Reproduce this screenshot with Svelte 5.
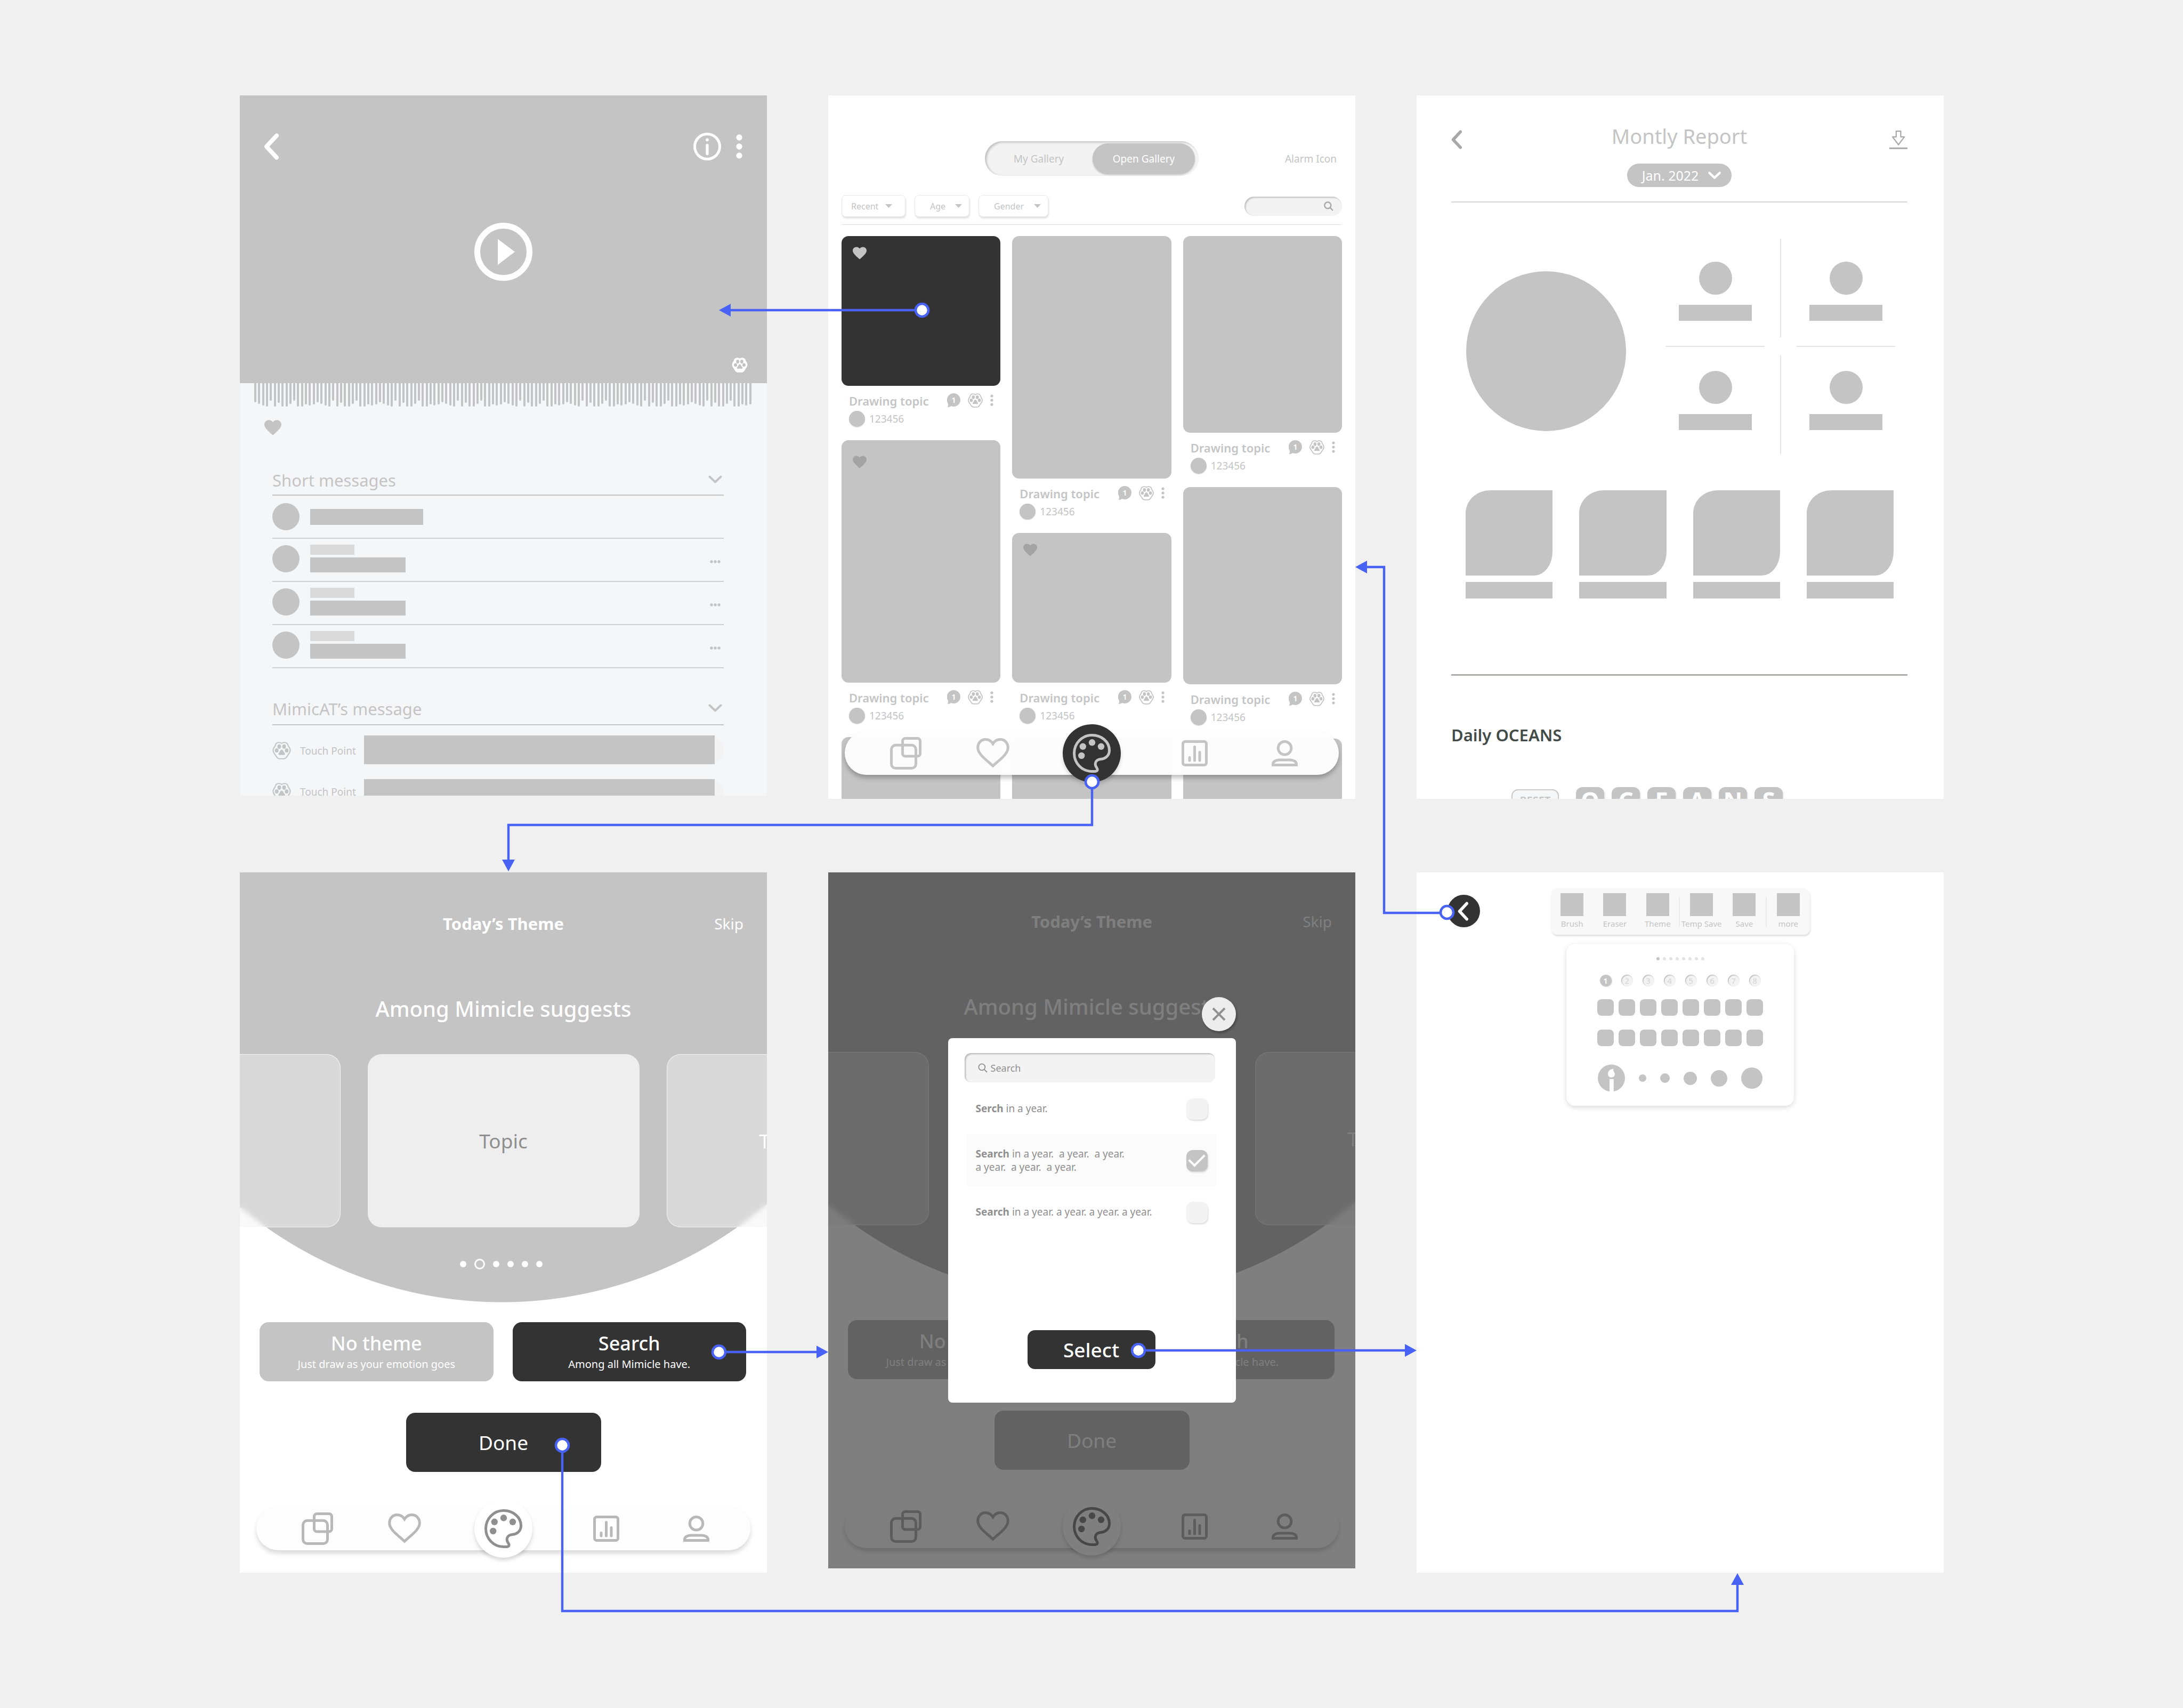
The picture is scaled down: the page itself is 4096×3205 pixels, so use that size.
<script>
  const wave = [36, 39, 42, 44, 33, 44, 37, 44, 44, 39, 33, 44, 44, 40, 42, 40];
  const bars = Array.from({ length: 128 }, (_, i) => wave[i % wave.length]);

  const gallery = [
    [
      { height: 281, tone: 'dark', liked: true },
      { height: 455, liked: true, low: true },
      { height: 300, bare: true }
    ],
    [{ height: 455 }, { height: 281, liked: true }, { height: 300, bare: true }],
    [{ height: 369 }, { height: 370 }, { height: 300, bare: true }]
  ];

  const numbers = [1, 2, 3, 4, 5, 6, 7, 8];
  const letters = ['O', 'C', 'E', 'A', 'N', 'S'];
  const brushes = [14, 18, 25, 31, 40];
</script>

{#snippet paw(solid)}
  <svg class="paw" class:solid viewBox="0 0 35 33.5" aria-hidden="true">
    <path class="edge" d="M12 1.3C14 1.3 16 1.6 17.5 3C19 1.6 21 1.3 23 1.3C27.5 1.3 29.5 4 30 8C31.5 10 33.8 12.5 33.8 16C33.8 21 29 25 27 29C25.5 31.5 23.5 32.2 21.5 32.2H13.5C11.5 32.2 9.5 31.5 8 29C6 25 1.2 21 1.2 16C1.2 12.5 3.5 10 5 8C5.5 4 7.5 1.3 12 1.3Z" />
    <g class="toes">
      <ellipse cx="12.9" cy="9" rx="3.5" ry="4.2" />
      <ellipse cx="22.1" cy="9" rx="3.5" ry="4.2" />
      <ellipse cx="8" cy="16.4" rx="3.5" ry="3.9" />
      <ellipse cx="27" cy="16.4" rx="3.5" ry="3.9" />
      <path d="M17.5 15C19.5 15 20.5 17 21 18.5C22 20.5 24.2 21.7 23.7 23.9C23 25.8 20 24.8 17.5 24.8S12 25.8 11.3 23.9C10.8 21.7 13 20.5 14 18.5C14.5 17 15.5 15 17.5 15Z" />
    </g>
  </svg>
{/snippet}

{#snippet heart()}
  <svg class="heart" viewBox="0 0 32 29" aria-hidden="true">
    <path d="M16 28.8L13.7 26.7C5.5 19.2 0 14.2 0 8.6C0 3.8 3.6.2 8.4.2C11.3.2 14.2 1.6 16 3.9C17.8 1.6 20.7.2 23.6.2C28.4.2 32 3.8 32 8.6C32 14.2 26.5 19.2 18.3 26.7Z" fill="currentColor" />
  </svg>
{/snippet}

{#snippet chevron()}
  <svg class="chevron" viewBox="0 0 26 15" aria-hidden="true">
    <path d="M2.5 2.5L13 12.5L23.5 2.5" />
  </svg>
{/snippet}

{#snippet back()}
  <svg class="back-icon" viewBox="0 0 28 50" aria-hidden="true">
    <path d="M24 4.5L5 25L24 45.5" />
  </svg>
{/snippet}

{#snippet magnifier()}
  <svg class="magnifier" viewBox="0 0 18 18" aria-hidden="true">
    <circle cx="7.3" cy="7.3" r="6" />
    <path d="M11.6 11.6L17 17" />
  </svg>
{/snippet}

{#snippet kebab()}
  <svg class="kebab" viewBox="0 0 6 22" aria-hidden="true">
    <circle cx="3" cy="3" r="2.6" /><circle cx="3" cy="11" r="2.6" /><circle cx="3" cy="19" r="2.6" />
  </svg>
{/snippet}

{#snippet tabs(kind)}
  <nav class="tabs {kind}" aria-label="Main">
    <button aria-label="Gallery">
      <svg width="59" height="61" viewBox="0 0 59 61">
        <rect x="2.5" y="15.3" width="46" height="43.2" rx="8" />
        <rect x="23.5" y="2.5" width="33" height="33.5" rx="5" />
      </svg>
    </button>
    <button aria-label="Likes">
      <svg width="62" height="56" viewBox="0 0 62 56">
        <path d="M31 52.3C20 41.5 2.7 31 2.7 17.8C2.7 9 9 2.6 17 2.6C23.3 2.6 28.2 6.2 31 10.6C33.8 6.2 38.7 2.6 45 2.6C53 2.6 59.3 9 59.3 17.8C59.3 31 42 41.5 31 52.3Z" />
      </svg>
    </button>
    <button class="draw" aria-label="Draw">
      <svg width="71" height="73" viewBox="0 0 71 73">
        <path d="M36 2.5C54 2.5 68.5 15 68.5 31C68.5 42 60 46.8 52.5 47.5C44 48.3 40.5 54 43 60.5C44.3 63.8 46.6 65 46 68C45.4 70.8 40.5 70.5 36 70.5C17 70.5 2.5 55 2.5 36.5C2.5 18 17 2.5 36 2.5Z" />
        <g class="dots">
          <circle cx="36" cy="16.3" r="6.2" /><circle cx="18.8" cy="23.8" r="6.2" />
          <circle cx="53" cy="23.8" r="6.2" /><circle cx="16.2" cy="41" r="6.2" />
        </g>
      </svg>
    </button>
    <button aria-label="Report">
      <svg width="49" height="49" viewBox="0 0 49 49">
        <rect x="2.5" y="2.5" width="44" height="44" rx="4" />
        <path d="M15 32.5V38M24.5 12.5V38M34 22.5V38" stroke-linecap="round" />
      </svg>
    </button>
    <button aria-label="Profile">
      <svg width="49" height="49" viewBox="0 0 49 49">
        <circle cx="24.5" cy="14.8" r="12.3" />
        <path d="M2.4 46.6V45C2.4 40 8 37 14 37H35C41 37 46.6 40 46.6 45V46.6Z" />
      </svg>
    </button>
  </nav>
{/snippet}

{#snippet theme(muted)}
  <div class="theme" class:muted>
    <header class="theme-head">
      <h2>Today’s Theme</h2>
      <button class="skip">Skip</button>
    </header>
    <p class="suggest">Among Mimicle suggests</p>
    <div class="carousel">
      <div class="topic side"></div>
      <div class="topic">{muted ? '' : 'Topic'}</div>
      <div class="topic side">Topic</div>
    </div>
    <div class="pager">
      <i></i><i class="current"></i><i></i><i></i><i></i><i></i>
    </div>
    <div class="choices">
      <button class="choice"><strong>No theme</strong><span>Just draw as your emotion goes</span></button>
      <button class="choice dark"><strong>Search</strong><span>Among all Mimicle have.</span></button>
    </div>
    <button class="done">Done</button>
    {@render tabs('light')}
  </div>
{/snippet}

<main class="board">
  <section class="screen detail" aria-label="Drawing detail">
    <div class="hero">
      <div class="hero-bar">
        <button aria-label="Back">{@render back()}</button>
        <div class="hero-actions">
          <button aria-label="Information">
            <svg width="52" height="52" viewBox="0 0 52 52">
              <circle cx="26" cy="26" r="23.5" fill="none" stroke="#fff" stroke-width="5" />
              <circle cx="26" cy="13.3" r="2.9" fill="#fff" />
              <path d="M26 23.5V39.5" stroke="#fff" stroke-width="5.4" stroke-linecap="round" />
            </svg>
          </button>
          <button aria-label="More">
            <svg width="12" height="46" viewBox="0 0 12 46" fill="#fff">
              <circle cx="6" cy="6" r="5.7" /><circle cx="6" cy="23" r="5.7" /><circle cx="6" cy="40" r="5.7" />
            </svg>
          </button>
        </div>
      </div>
      <button class="play" aria-label="Play">
        <svg width="109" height="109" viewBox="0 0 109 109">
          <circle cx="54.5" cy="54.5" r="49" fill="none" stroke="#fff" stroke-width="11" />
          <path d="M44 30.5L76 54.5L44 79Z" fill="#fff" />
        </svg>
      </button>
      <div class="hero-foot">{@render paw(true)}</div>
    </div>
    <div class="wave">
      {#each bars as h}<i style="height: {h}px"></i>{/each}
    </div>
    <div class="detail-body">
      <button class="like" aria-label="Like">{@render heart()}</button>
      <header class="fold"><h2>Short messages</h2>{@render chevron()}</header>
      <ul class="messages">
        <li class="single"><i class="avatar"></i><div class="lines"><i class="long"></i></div></li>
        {#each [1, 2, 3] as n}
          <li>
            <i class="avatar"></i>
            <div class="lines"><i class="name"></i><i class="text"></i></div>
            <button class="more" aria-label="More">
              <svg width="20" height="6" viewBox="0 0 20 6" fill="currentColor">
                <circle cx="3" cy="3" r="2.7" /><circle cx="10" cy="3" r="2.7" /><circle cx="17" cy="3" r="2.7" />
              </svg>
            </button>
          </li>
        {/each}
      </ul>
      <header class="fold second"><h2>MimicAT’s message</h2>{@render chevron()}</header>
      <div class="touch">
        <div class="touch-labels">
          <div>{@render paw(false)}<span>Touch Point</span></div>
          <div>{@render paw(false)}<span>Touch Point</span></div>
        </div>
        <div class="touch-bars">
          <div><i></i></div>
          <div><i></i></div>
        </div>
      </div>
    </div>
  </section>

  <section class="screen gallery" aria-label="Open gallery">
    <header class="gallery-head">
      <div class="toggle">
        <button>My Gallery</button>
        <button class="active">Open Gallery</button>
      </div>
      <span class="alarm">Alarm Icon</span>
    </header>
    <div class="filters">
      {#each [['recent', 'Recent'], ['age', 'Age'], ['gender', 'Gender']] as [id, label]}
        <div class="filter {id}">
          <select aria-label={label}><option>{label}</option></select>
          <svg width="13" height="7" viewBox="0 0 13 7" aria-hidden="true"><path d="M0 0H13L6.5 7Z" fill="currentColor" /></svg>
        </div>
      {/each}
      <div class="find">
        <input type="text" aria-label="Find drawings" />
        {@render magnifier()}
      </div>
    </div>
    <div class="columns">
      {#each gallery as column}
        <div class="column">
          {#each column as card}
            <div class="card" class:dark={card.tone === 'dark'} class:low={card.low} style="height: {card.height}px">
              {#if card.liked}{@render heart()}{/if}
            </div>
            {#if !card.bare}
              <div class="meta">
                <div class="about">
                  <h3>Drawing topic</h3>
                  <p><i class="avatar"></i>123456</p>
                </div>
                <div class="marks">
                  <svg width="25" height="26" viewBox="0 0 25 26">
                    <path d="M12.5 0A12.5 12.5 0 0 1 12.5 25C10.6 25 9 24.6 7.5 23.9C5.5 25.4 3 26.2.5 25.8C2 24.2 2.2 22.2 1.9 19.4A12.5 12.5 0 0 1 12.5 0Z" fill="currentColor" />
                    <text x="12.5" y="17.8" text-anchor="middle">1</text>
                  </svg>
                  {@render paw(false)}
                  {@render kebab()}
                </div>
              </div>
            {/if}
          {/each}
        </div>
      {/each}
    </div>
    {@render tabs('floating')}
  </section>

  <section class="screen report" aria-label="Monthly report">
    <header class="report-head">
      <button aria-label="Back">{@render back()}</button>
      <h2>Montly Report</h2>
      <button class="download" aria-label="Download">
        <svg width="34" height="35" viewBox="0 0 34 35">
          <path d="M12.8 1.2H21.4V11.8H28.2L17.1 26.5L6 11.8H12.8Z" fill="none" stroke="currentColor" stroke-width="2.2" stroke-linejoin="round" />
          <path d="M0 33.3H34" stroke="currentColor" stroke-width="3" />
        </svg>
      </button>
    </header>
    <button class="month">Jan. 2022 {@render chevron()}</button>
    <hr />
    <div class="summary">
      <i class="disc"></i>
      <div class="quad">
        <div class="cell"><i class="dot"></i><i class="label"></i></div>
        <i class="rule"></i>
        <div class="cell"><i class="dot"></i><i class="label"></i></div>
        <i class="rule"></i><span></span><i class="rule"></i>
        <div class="cell lower"><i class="dot"></i><i class="label"></i></div>
        <i class="rule"></i>
        <div class="cell lower"><i class="dot"></i><i class="label"></i></div>
      </div>
    </div>
    <div class="leaves">
      {#each [1, 2, 3, 4] as n}<div><i class="leaf"></i><i class="strip"></i></div>{/each}
    </div>
    <hr class="strong" />
    <h3>Daily OCEANS</h3>
    <div class="keys">
      <button class="reset">RESET</button>
      {#each letters as letter}<button class="key">{letter}</button>{/each}
    </div>
  </section>

  <section class="screen white" aria-label="Theme selection">
    {@render theme(false)}
  </section>

  <section class="screen white short" aria-label="Theme search">
    {@render theme(true)}
    <div class="scrim"></div>
    <div class="dialog-layer">
      <button class="close" aria-label="Close">
        <svg width="26" height="26" viewBox="0 0 26 26"><path d="M2 2L24 24M24 2L2 24" stroke="currentColor" stroke-width="4" /></svg>
      </button>
      <div class="dialog" role="dialog" aria-label="Search themes">
        <div class="search-box">
          {@render magnifier()}
          <input type="text" placeholder="Search" aria-label="Search" />
        </div>
        <label class="result"><span><b>Serch</b> in a year.</span><input type="checkbox" /></label>
        <label class="result picked"><span><b>Search</b>{' in a year.  a year.  a year.\na year.  a year.  a year.'}</span><input type="checkbox" checked /></label>
        <label class="result"><span><b>Search</b> in a year. a year. a year. a year.</span><input type="checkbox" /></label>
        <button class="select">Select</button>
      </div>
    </div>
  </section>

  <section class="screen white canvas" aria-label="Drawing canvas">
    <button class="leave" aria-label="Back">{@render back()}</button>
    <div class="tools">
      <div class="toolbar">
        <button><i></i>Brush</button>
        <button><i></i>Eraser</button>
        <button><i></i>Theme</button>
        <span class="split"></span>
        <button><i></i>Temp Save</button>
        <button><i></i>Save</button>
        <span class="split"></span>
        <button><i></i>more</button>
      </div>
      <div class="panel">
        <div class="steps">{#each numbers as n}<i class:on={n === 1}></i>{/each}</div>
        <div class="sets">{#each numbers as n}<button class:on={n === 1}>{n}</button>{/each}</div>
        <div class="swatches">{#each numbers as n}<i></i>{/each}</div>
        <div class="swatches">{#each numbers as n}<i></i>{/each}</div>
        <div class="sizes">
          <svg width="51" height="52" viewBox="0 0 51 52">
            <circle cx="25.5" cy="26" r="25.5" fill="#c4c4c4" />
            <path d="M29.6 8.6C22.5 9.2 19 13.4 19 18.2C19 22 21.6 24.7 25.4 24.7C29.4 24.7 32.2 22 31.8 18C31.4 14.6 27.6 12.8 29.6 8.6Z" fill="#fff" />
            <path d="M22 27.8H29.8V52H22Z" fill="#fff" />
          </svg>
          {#each brushes as size}<i style="width: {size}px; height: {size}px"></i>{/each}
        </div>
      </div>
    </div>
  </section>

  <svg class="flows" viewBox="0 0 4096 3205" aria-hidden="true">
    <g class="lines">
      <path d="M1730 582H1368" />
      <path d="M2049 1467V1548H954V1616" />
      <path d="M2715 1713H2597V1064H2562" />
      <path d="M1349 2537H1535" />
      <path d="M2136 2534H2640" />
      <path d="M1055 2712V3023H3260V2970" />
    </g>
    <g class="heads">
      <path d="M1349 582L1371 570V594Z" />
      <path d="M954 1635L942 1613H966Z" />
      <path d="M2543 1064L2565 1052V1076Z" />
      <path d="M1554 2537L1532 2525V2549Z" />
      <path d="M2658 2534L2636 2522V2546Z" />
      <path d="M3260 2952L3248 2974H3272Z" />
    </g>
    <g class="stops">
      <circle cx="1730" cy="582" r="12" />
      <circle cx="2049" cy="1467" r="12" />
      <circle cx="2715" cy="1712" r="12" />
      <circle cx="1349" cy="2537" r="12" />
      <circle cx="2136" cy="2534" r="12" />
      <circle cx="1055" cy="2712" r="12" />
    </g>
  </svg>
</main>

<style>
  :global(body) {
    background: #f0f0f0;
    font-family: 'Noto Sans', sans-serif;
    color: #c4c4c4;
  }

  .board {
    position: relative;
    box-sizing: border-box;
    min-height: 100vh;
    padding: 179px 449px 254px 450px;
    display: grid;
    grid-template-columns: repeat(3, minmax(0, 1fr));
    column-gap: 115px;
    row-gap: 138px;
    align-items: start;
    background: #f0f0f0;
  }

  .board :global(*) {
    box-sizing: border-box;
  }

  h2, h3, p, ul { margin: 0; padding: 0; list-style: none; font-weight: 400; }
  i { display: block; font-style: normal; }
  svg { display: block; flex: none; }
  button {
    font: inherit;
    color: inherit;
    background: none;
    border: 0;
    padding: 0;
    cursor: pointer;
  }
  input, select { font: inherit; color: inherit; border: 0; outline: 0; background: none; }

  .screen {
    position: relative;
    overflow: hidden;
    aspect-ratio: 989 / 1320;
    background: #fff;
  }
  .detail, .white { aspect-ratio: 989 / 1314; }
  .short { aspect-ratio: 989 / 1306; }

  .paw { width: 35px; height: 33px; }
  .paw .edge { fill: none; stroke: currentColor; stroke-width: 2.2; }
  .paw .toes { fill: currentColor; }
  .paw.solid { width: 30px; height: 28px; }
  .paw.solid .edge { fill: #fff; stroke: #fff; }
  .paw.solid .toes { fill: #c4c4c4; }
  .heart { width: 32px; height: 29px; }
  .chevron { width: 26px; height: 15px; }
  .chevron path, .back-icon path {
    fill: none;
    stroke: currentColor;
    stroke-width: 4;
    stroke-linecap: round;
    stroke-linejoin: round;
  }
  .back-icon { width: 28px; height: 50px; }
  .back-icon path { stroke-width: 8; }
  .magnifier { width: 18px; height: 18px; fill: none; stroke: currentColor; stroke-width: 2.4; }
  .kebab { width: 6px; height: 22px; fill: currentColor; }

  /* Drawing detail */
  .detail { background: #f5f6f8; }
  .hero {
    height: 540px;
    padding: 70px 36px 20px 45px;
    background: #c4c4c4;
    color: #fff;
    display: flex;
    flex-direction: column;
    justify-content: space-between;
  }
  .hero-bar, .hero-actions { display: flex; align-items: center; justify-content: space-between; }
  .hero-actions { gap: 28px; padding-right: 10px; }
  .play { align-self: center; margin-bottom: 28px; margin-right: 9px; }
  .hero-foot { display: flex; justify-content: flex-end; }
  .wave { display: flex; justify-content: space-between; height: 44px; padding: 0 28px 0 27px; }
  .wave i { width: 4px; border-radius: 0 0 2px 2px; background: #c4c4c4; }
  .detail-body { padding: 25px 81px 0 61px; }
  .like { display: block; margin-left: -15px; }
  .fold {
    display: flex;
    align-items: flex-end;
    justify-content: space-between;
    height: 113px;
    padding-right: 3px;
    padding-bottom: 5px;
    border-bottom: 2px solid #c4c4c4;
  }
  .fold h2 { font-size: 31px; line-height: 44px; }
  .fold .chevron { margin-bottom: 16px; }
  .fold.second { height: 107px; padding-bottom: 7px; }
  .messages li {
    display: flex;
    align-items: center;
    gap: 20px;
    height: 81px;
    padding: 0 6px 5px 0;
    border-bottom: 2px solid #cfd0d2;
  }
  .messages .single { padding-bottom: 0; }
  .messages .avatar { width: 51px; height: 51px; border-radius: 50%; background: #c4c4c4; }
  .messages .lines { flex: 1; display: grid; gap: 5px; }
  .messages .lines i { background: #c4c4c4; }
  .messages .long { width: 212px; height: 30px; }
  .messages .lines .name { width: 83px; height: 19px; background: #dadada; }
  .messages .text { width: 179px; height: 28px; }
  .more { align-self: flex-end; margin-bottom: 28px; }
  .touch { display: flex; gap: 15px; padding-top: 19px; }
  .touch-labels { display: grid; gap: 44px; padding-top: 12px; align-content: start; }
  .touch-labels div { display: flex; align-items: center; gap: 17px; height: 33px; font-size: 19px; }
  .touch-bars { flex: 1; display: grid; gap: 28px; }
  .touch-bars div { height: 54px; padding-right: 17px; border-radius: 27px; background: #f3f3f4; }
  .touch-bars i { height: 54px; background: #c4c4c4; }

  /* Gallery */
  .gallery { padding: 86px 25px 0; }
  .gallery-head {
    display: grid;
    grid-template-columns: 1fr 401px 1fr;
    align-items: center;
    font-size: 19px;
  }
  .toggle {
    grid-column: 2;
    display: flex;
    align-items: center;
    height: 65px;
    padding-right: 7px;
    border-radius: 33px;
    background: #f3f3f3;
    box-shadow: inset 3px 2px 4px rgba(0, 0, 0, 0.22);
  }
  .toggle button { flex: 1; height: 57px; }
  .toggle .active {
    flex: none;
    width: 192px;
    border-radius: 29px;
    background: #c4c4c4;
    color: #fff;
    box-shadow: 0 2px 3px rgba(0, 0, 0, 0.2);
  }
  .alarm { justify-self: end; padding-right: 10px; }
  .filters {
    display: flex;
    gap: 17px;
    margin-top: 36px;
    padding-bottom: 14px;
    border-bottom: 1px solid #dfdfdf;
    font-size: 16px;
  }
  .filter {
    display: flex;
    align-items: center;
    justify-content: space-between;
    height: 41px;
    width: 120px;
    padding: 0 24px 0 17px;
    border: 1px solid #e8e8e8;
    border-radius: 8px;
    background: #fff;
    box-shadow: 1px 3px 3px rgba(0, 0, 0, 0.12);
  }
  .filter select { appearance: none; flex: none; padding: 0; margin: 0; }
  .filter.age { width: 103px; padding: 0 13px 0 28px; }
  .filter.gender { width: 131px; padding: 0 13px 0 28px; }
  .find {
    display: flex;
    align-items: center;
    align-self: center;
    margin-left: auto;
    width: 183px;
    height: 36px;
    padding: 0 16px;
    border-radius: 18px;
    color: #a8a8a8;
    background: #f3f3f3;
    box-shadow: inset 2px 2px 3px rgba(0, 0, 0, 0.22);
  }
  .find input { flex: 1; min-width: 0; }
  .columns {
    display: grid;
    grid-template-columns: repeat(3, minmax(0, 1fr));
    gap: 22px;
    margin-top: 21px;
  }
  .card { padding: 20px 21px; border-radius: 13px; background: #c4c4c4; color: #a3a3a3; }
  .card.low { padding-top: 29px; }
  .card.dark { background: #333; color: #c4c4c4; }
  .card .heart { width: 26px; height: 24px; }
  .meta { display: flex; justify-content: space-between; height: 102px; padding: 13px 13px 0 14px; }
  .about h3 { font-size: 22px; line-height: 30px; font-weight: 600; }
  .about p { display: flex; align-items: center; gap: 8px; margin-top: 4px; font-size: 19px; line-height: 30px; }
  .about .avatar {
    width: 30px;
    height: 30px;
    border-radius: 50%;
    background: #c4c4c4;
    box-shadow: 0 1px 2px rgba(0, 0, 0, 0.15);
  }
  .marks { display: flex; align-items: center; gap: 14px; height: 28px; }
  .marks .paw { width: 28px; height: 27px; }
  .marks text { font-size: 15px; font-weight: 600; fill: #fff; }

  /* Tab bar */
  .tabs {
    display: grid;
    grid-template-columns: 164fr 164fr 207fr 178fr 161fr;
    align-items: center;
    justify-items: center;
    height: 82px;
    margin: 0 31px;
    padding: 0 21px 0 32px;
    border-radius: 41px;
    background: #fdfdfd;
    color: #b8b8b8;
    box-shadow: 0 6px 8px rgba(0, 0, 0, 0.15);
  }
  .tabs svg { fill: none; stroke: currentColor; stroke-width: 5; }
  .tabs .dots { fill: currentColor; stroke: none; }
  .draw {
    display: grid;
    place-items: center;
    width: 109px;
    height: 109px;
    margin: -14px 0;
    border-radius: 50%;
    background: #fff;
    color: #8f8f8f;
    box-shadow: 0 5px 7px rgba(0, 0, 0, 0.15);
  }
  .floating {
    position: absolute;
    left: 0;
    right: 0;
    bottom: 45px;
    color: #c4c4c4;
    background: rgba(253, 253, 253, 0.98);
    box-shadow: 0 6px 8px rgba(0, 0, 0, 0.25);
  }
  .floating .draw { background: #333; color: #c4c4c4; }

  /* Report */
  .report { padding: 56px 68px 0 65px; }
  .report-head {
    display: grid;
    grid-template-columns: 1fr auto 1fr;
    align-items: end;
    height: 45px;
    color: #a8a8a8;
  }
  .report-head .back-icon { width: 20px; height: 36px; }
  .report-head h2 { align-self: start; font-size: 38px; line-height: 40px; color: #c4c4c4; }
  .report-head .download { justify-self: end; }
  .month {
    display: flex;
    align-items: center;
    justify-content: center;
    gap: 18px;
    width: 196px;
    height: 44px;
    margin: 27px auto 0;
    padding-left: 8px;
    border-radius: 22px;
    background: #c4c4c4;
    color: #fff;
    font-size: 25px;
  }
  .month .chevron { width: 24px; height: 14px; }
  .month .chevron path { stroke-width: 4.6; }
  hr { height: 2px; margin: 27px 0 0; border: 0; background: #d6d6d6; }
  .summary { display: flex; align-items: center; justify-content: space-between; margin: 68px 23px 0 28px; }
  .disc { width: 300px; height: 300px; border-radius: 50%; background: #c4c4c4; margin-top: 17px; }
  .quad {
    display: grid;
    width: 430px;
    grid-template-columns: 1fr 2px 1fr;
    grid-template-rows: 185px 2px 185px;
    gap: 16px 29px;
  }
  .rule { background: #e4e4e4; }
  .cell { display: grid; justify-items: center; align-content: start; gap: 19px; padding-top: 43px; }
  .cell.lower { padding-top: 29px; }
  .dot { width: 62px; height: 62px; border-radius: 50%; background: #c4c4c4; }
  .label { width: 137px; height: 30px; background: #c4c4c4; }
  .leaves {
    display: grid;
    grid-template-columns: repeat(4, 1fr);
    gap: 50px;
    margin: 68px 26px 0 27px;
  }
  .leaf { height: 160px; border-radius: 46px 0 34px 0 / 43px 0 45px 0; background: #c4c4c4; }
  .strip { height: 31px; margin-top: 12px; background: #c4c4c4; }
  hr.strong { height: 3px; margin-top: 142px; background: #a9aeab; }
  .report h3 { margin-top: 91px; font-size: 31px; line-height: 40px; font-weight: 600; color: #434b49; }
  .keys { display: flex; align-items: flex-start; gap: 14px; margin: 78px 0 0 113px; }
  .key {
    width: 53px;
    height: 50px;
    border-radius: 12px;
    background: #c4c4c4;
    color: #fff;
    font-size: 44px;
    line-height: 50px;
    font-weight: 700;
    box-shadow: 1px 2px 3px rgba(0, 0, 0, 0.15);
  }
  .reset {
    width: 89px;
    height: 42px;
    margin: 4px 18px 0 0;
    border: 2px solid #c9c9c9;
    border-radius: 12px;
    background: #f5f6f8;
    font-size: 20px;
    line-height: 26px;
    font-weight: 600;
  }

  /* Theme selection */
  .theme {
    height: 100%;
    padding-top: 76px;
    background: radial-gradient(circle at 49.7% 42px, #c4c4c4 764px, #fff 765px);
    color: #fff;
  }
  .theme.muted { padding-top: 72px; background: radial-gradient(circle at 49.7% 38px, #c4c4c4 764px, #fff 765px); }
  .theme-head { display: grid; grid-template-columns: 1fr auto 1fr; padding: 0 44px; line-height: 40px; }
  .theme-head h2 { grid-column: 2; font-size: 31px; font-weight: 700; }
  .skip { justify-self: end; font-size: 28px; }
  .suggest {
    margin-top: 112px;
    font-size: 40px;
    line-height: 56px;
    font-weight: 500;
    text-align: center;
  }
  .carousel { display: flex; justify-content: center; gap: 51px; margin-top: 57px; overflow: hidden; }
  .topic {
    flex: none;
    display: grid;
    place-items: center;
    width: 510px;
    height: 325px;
    border-radius: 26px;
    background: #eee;
    color: #8f8f8f;
    font-size: 37px;
  }
  .topic.side {
    width: 438px;
    border: 1px solid rgba(255, 255, 255, 0.7);
    background: rgba(243, 243, 243, 0.46);
    backdrop-filter: blur(4px);
    color: #fff;
  }
  .pager { display: flex; align-items: center; justify-content: center; gap: 15px; height: 20px; margin-top: 59px; padding-right: 8px; }
  .pager i { width: 12px; height: 12px; border-radius: 50%; background: #fff; }
  .pager .current { width: 20px; height: 20px; border: 3px solid #fff; background: none; }
  .choices { display: grid; grid-template-columns: 1fr 1fr; gap: 36px; margin-top: 99px; padding: 0 39px 0 37px; }
  .choice {
    display: grid;
    align-content: center;
    gap: 3px;
    height: 111px;
    border-radius: 17px;
    background: #c4c4c4;
  }
  .choice strong { font-size: 36px; line-height: 44px; font-weight: 500; }
  .choice span { font-size: 20px; line-height: 28px; }
  .choice.dark, .done { background: #333; }
  .done {
    display: block;
    width: 366px;
    height: 111px;
    margin: 59px auto 65px;
    border-radius: 17px;
    font-size: 37px;
  }
  .muted .choice.dark, .muted .done { background: #c4c4c4; }

  /* Theme search */
  .scrim { position: absolute; inset: 0; background: rgba(0, 0, 0, 0.5); }
  .dialog-layer {
    position: absolute;
    inset: 234px 0 auto;
    width: 540px;
    margin: 0 auto;
    display: grid;
    gap: 13px;
    color: #8f8f8f;
    font-size: 18px;
  }
  .close {
    justify-self: end;
    display: grid;
    place-items: center;
    width: 64px;
    height: 64px;
    border-radius: 50%;
    background: #ededed;
    box-shadow: 2px 3px 4px rgba(0, 0, 0, 0.3);
  }
  .dialog { height: 684px; padding: 28px 36px 63px 34px; border-radius: 8px; background: #fff; display: flex; flex-direction: column; }
  .search-box {
    display: flex;
    align-items: center;
    gap: 6px;
    height: 55px;
    margin: 0 3px 1px -3px;
    padding: 0 25px;
    border-radius: 12px;
    background: #f3f3f3;
    box-shadow: inset 2px 2px 3px rgba(0, 0, 0, 0.25);
  }
  .search-box .magnifier { stroke-width: 1.8; }
  .search-box input { flex: 1; min-width: 0; padding: 0; }
  .search-box input::placeholder { color: #8f8f8f; opacity: 1; }
  .result {
    display: flex;
    align-items: center;
    justify-content: space-between;
    height: 97px;
    padding: 0 17px 0 18px;
    font-size: 19px;
    line-height: 25px;
    white-space: pre-wrap;
  }
  .result b { font-weight: 700; }
  .picked { background: #fbfbfb; }
  .result input {
    appearance: none;
    flex: none;
    width: 40px;
    height: 40px;
    margin: 0;
    border-radius: 12px;
    background: #f3f3f3;
    box-shadow: 1px 2px 3px rgba(0, 0, 0, 0.15);
    display: grid;
    place-items: center;
  }
  .result input:checked { background: #c4c4c4; }
  .result input:checked::before {
    content: '';
    width: 25px;
    height: 13px;
    margin-top: -8px;
    border: solid #fff;
    border-width: 0 0 4px 4px;
    transform: rotate(-45deg);
  }
  .select {
    width: 240px;
    height: 73px;
    margin: auto auto 0;
    border-radius: 14px;
    background: #333;
    color: #fff;
    font-size: 37px;
    font-weight: 500;
  }

  /* Drawing canvas */
  .canvas { display: grid; grid-template-columns: 1fr 486px 1fr; align-items: start; padding-top: 30px; }
  .leave {
    display: grid;
    place-items: center;
    width: 61px;
    height: 61px;
    margin: 12px 0 0 58px;
    padding-right: 3px;
    border-radius: 50%;
    background: #333;
    color: #fff;
  }
  .leave .back-icon { width: 20px; height: 36px; }
  .tools { display: grid; justify-items: center; gap: 17px; }
  .toolbar {
    display: flex;
    width: 100%;
    height: 87px;
    padding-top: 9px;
    border-radius: 12px;
    background: #f8f8f8;
    font-size: 15px;
    line-height: 20px;
    box-shadow: 1px 3px 3px rgba(0, 0, 0, 0.12);
  }
  .toolbar button { flex: 1 1 0; min-width: 0; display: grid; justify-content: center; justify-items: center; align-content: start; gap: 4px; white-space: nowrap; }
  .toolbar i { width: 43px; height: 43px; background: #c4c4c4; }
  .split { width: 2px; height: 56px; margin-top: 7px; background: #ebebeb; }
  .panel {
    display: grid;
    justify-items: center;
    width: 427px;
    padding: 25px 0 26px;
    border-radius: 16px;
    background: #fff;
    box-shadow: 0 3px 10px rgba(0, 0, 0, 0.15);
  }
  .steps { display: flex; gap: 6px; }
  .steps i { width: 6px; height: 6px; border-radius: 50%; background: #e3e3e3; }
  .steps .on { background: #c4c4c4; }
  .sets { display: flex; gap: 18px; margin-top: 27px; }
  .sets button {
    width: 22px;
    height: 22px;
    border-radius: 50%;
    background: #f3f3f3;
    color: #d4d4d4;
    font-size: 15px;
    line-height: 22px;
    box-shadow: inset 1px 1px 2px rgba(0, 0, 0, 0.3);
  }
  .sets .on { background: #c4c4c4; color: #fff; font-weight: 600; box-shadow: 1px 1px 2px rgba(0, 0, 0, 0.15); }
  .swatches { display: flex; gap: 9px; margin-top: 24px; }
  .swatches i { width: 31px; height: 31px; border-radius: 8px; background: #c4c4c4; }
  .swatches + .swatches { margin-top: 26px; }
  .sizes { display: flex; align-items: center; gap: 26px; margin-top: 34px; }
  .sizes i { border-radius: 50%; background: #c4c4c4; }

  /* Connections between screens */
  .flows { position: absolute; inset: 0; width: 100%; height: auto; pointer-events: none; }
  .lines path { fill: none; stroke: #4762f5; stroke-width: 4.4; }
  .heads path { fill: #4762f5; }
  .stops circle { fill: #fff; stroke: #4762f5; stroke-width: 4.6; }
</style>
